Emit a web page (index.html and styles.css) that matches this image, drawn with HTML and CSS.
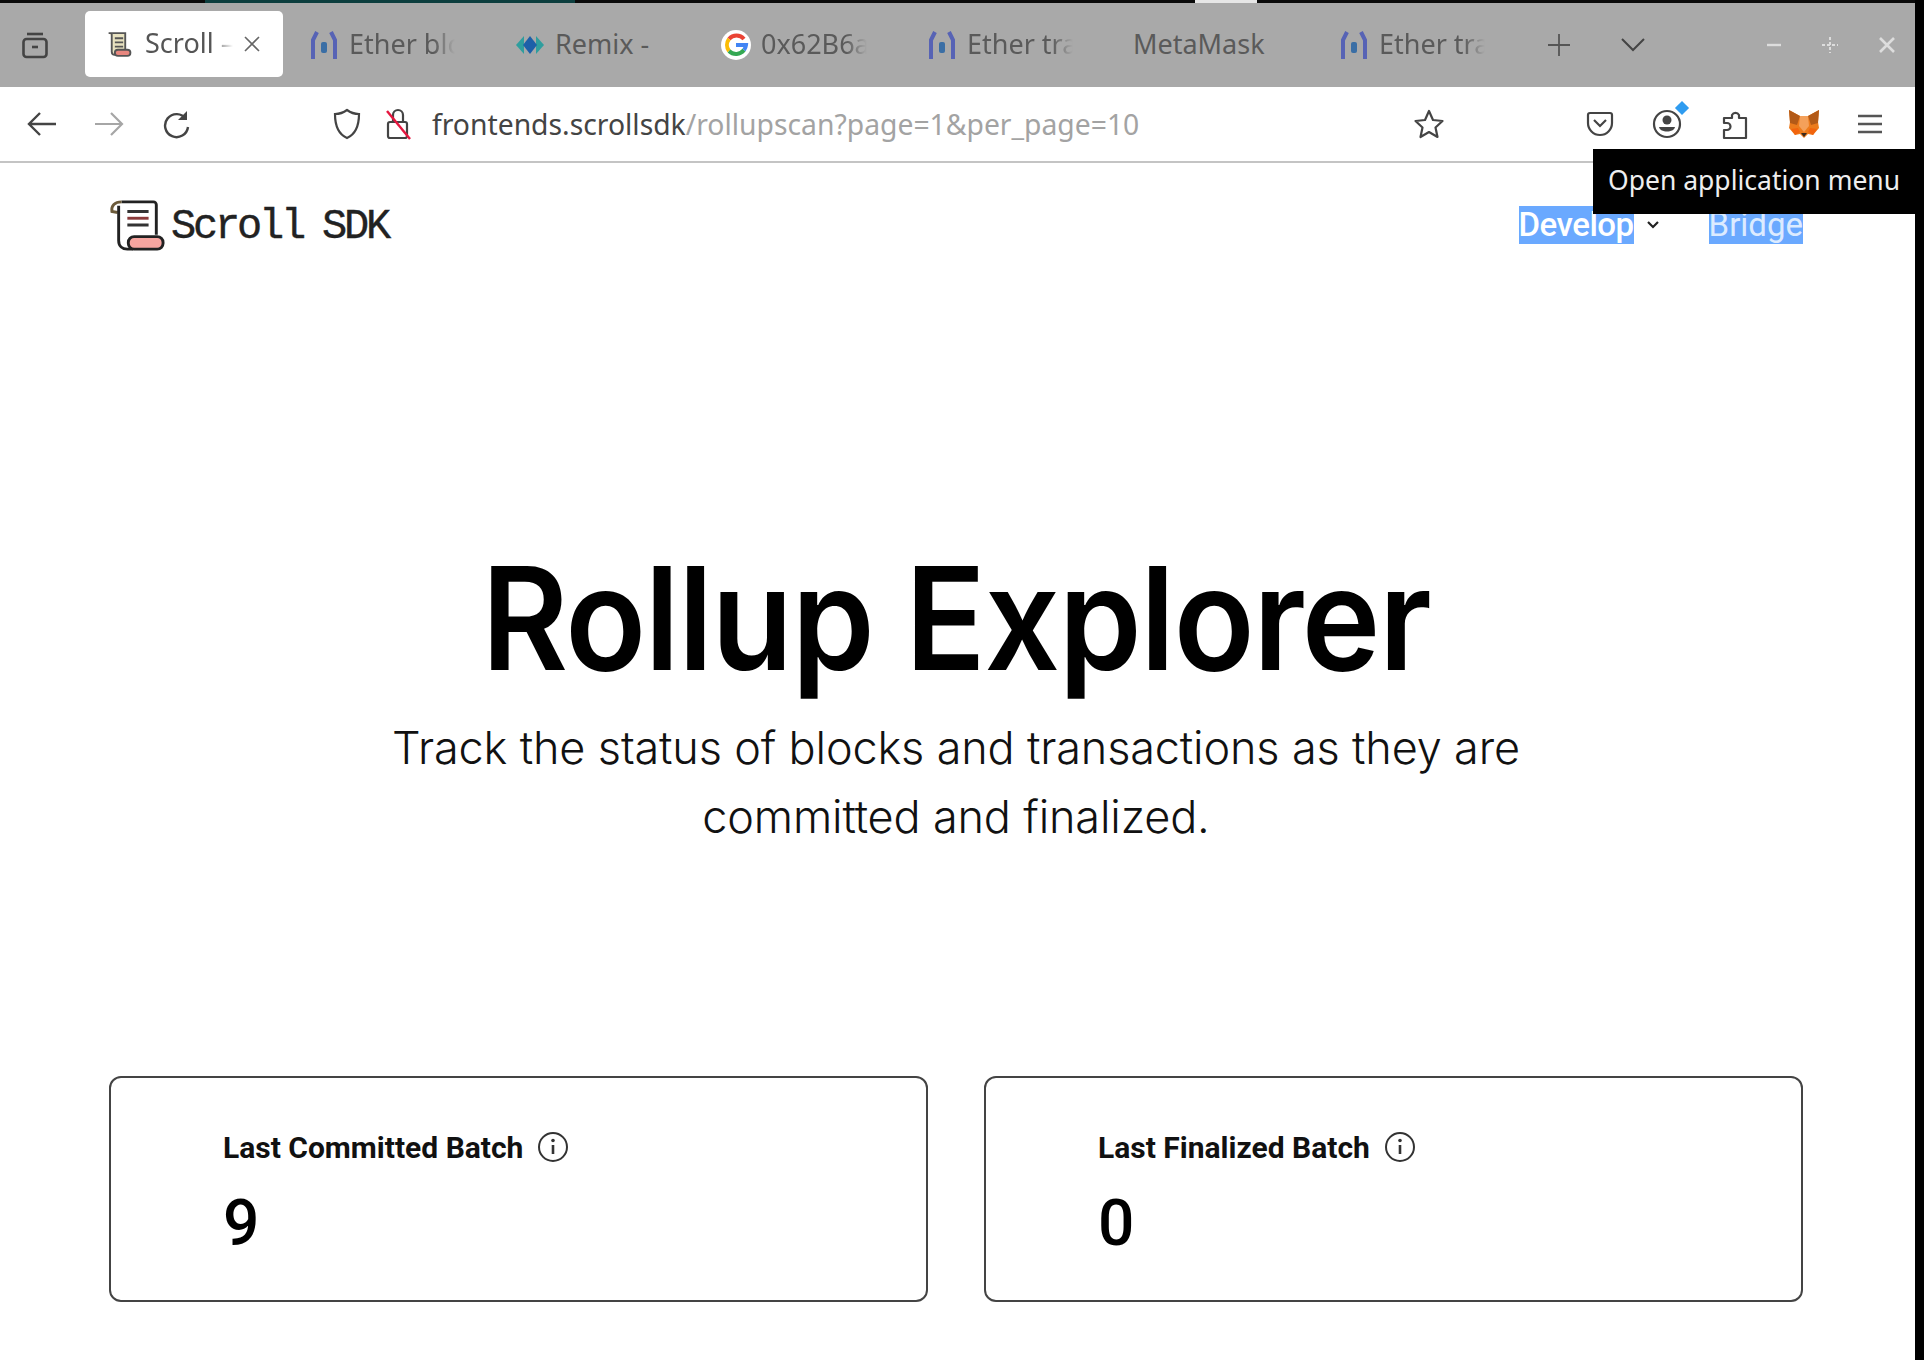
FILE: index.html
```html
<!DOCTYPE html>
<html lang="en">
<head>
    <meta charset="UTF-8">
    <title>Scroll - Rollup Explorer</title>
    <link rel="stylesheet" href="styles.css">
</head>
<body>
    <div class="window">
        <!-- Top edge of the screen -->
        <div class="screen-edge">
            <span class="edge-teal"></span>
            <span class="edge-light"></span>
        </div>

        <!-- Tab strip -->
        <div class="tabbar">
            <svg class="tab-list-icon" width="32" height="32" viewBox="0 0 32 32" fill="none" stroke="#444" stroke-width="2.600"><path d="M8 5h16"/><rect x="4.500" y="10" width="23" height="18" rx="3"/><path d="M13 18h6"/></svg>
            <div class="tab tab-active">
                <svg class="favicon" width="28" height="27" viewBox="0 0 26 26" fill="none" stroke="#555" stroke-width="1.800"><path d="M3 2h16v17" fill="#e8e2c0"/><path d="M6 2v18a3 3 0 0 0 3 3h13" fill="#e8e2c0"/><path d="M9 7h8M9 11h8M9 15h8"/><rect x="9" y="18" width="15" height="6" rx="3" fill="#e8877f" stroke="#555"/></svg>
                <span class="tab-title tab-title-active">Scroll –</span>
                <svg class="tab-close" width="18" height="18" viewBox="0 0 18 18" stroke="#666" stroke-width="1.600"><path d="M2 2l14 14M16 2L2 16"/></svg>
            </div>
            <div class="tab">
                <svg class="favicon" width="30" height="32" viewBox="0 0 30 32" fill="none"><path d="M4 30V11l4-8M26 30V11l-4-8" stroke="#5763b5" stroke-width="4"/><rect x="12" y="13" width="6" height="11" rx="2" fill="#3a6ea5"/></svg>
                <span class="tab-title tab-fade">Ether blo</span>
            </div>
            <div class="tab">
                <svg class="favicon" width="30" height="26" viewBox="0 0 30 26"><path d="M1 13l8-9v18z" fill="#2f9e9e"/><path d="M29 13l-8-9v18z" fill="#2f9e9e"/><path d="M15 4l7 9-7 9-7-9z" fill="#1d5fa8"/></svg>
                <span class="tab-title">Remix -</span>
            </div>
            <div class="tab">
                <svg class="favicon" width="30" height="30" viewBox="0 0 30 30" fill="none" stroke-width="4"><circle cx="15" cy="15" r="15" fill="#fff" stroke="none"/><path d="M23 9a10 10 0 0 0-15 0" stroke="#ea4335"/><path d="M8 9a10 10 0 0 0 0 12" stroke="#fbbc05"/><path d="M8 21a10 10 0 0 0 15-1" stroke="#34a853"/><path d="M23 20a10 10 0 0 0 2-5H15" stroke="#4285f4"/></svg>
                <span class="tab-title tab-fade">0x62B6a</span>
            </div>
            <div class="tab">
                <svg class="favicon" width="30" height="32" viewBox="0 0 30 32" fill="none"><path d="M4 30V11l4-8M26 30V11l-4-8" stroke="#5763b5" stroke-width="4"/><rect x="12" y="13" width="6" height="11" rx="2" fill="#3a6ea5"/></svg>
                <span class="tab-title tab-fade">Ether tra</span>
            </div>
            <div class="tab">
                <span class="tab-title">MetaMask</span>
            </div>
            <div class="tab">
                <svg class="favicon" width="30" height="32" viewBox="0 0 30 32" fill="none"><path d="M4 30V11l4-8M26 30V11l-4-8" stroke="#5763b5" stroke-width="4"/><rect x="12" y="13" width="6" height="11" rx="2" fill="#3a6ea5"/></svg>
                <span class="tab-title tab-fade">Ether tra</span>
            </div>
            <svg class="tab-plus" width="24" height="24" viewBox="0 0 24 24" stroke="#555" stroke-width="1.800"><path d="M12 1v22M1 12h22"/></svg>
            <svg class="tab-more" width="26" height="16" viewBox="0 0 26 16" fill="none" stroke="#444" stroke-width="2"><path d="M2 2l11 11L24 2"/></svg>
            <div class="window-controls">
                <svg width="16" height="16" viewBox="0 0 16 16" stroke="#ddd" stroke-width="2.400"><path d="M1 8h14"/></svg>
                <svg width="18" height="18" viewBox="0 0 18 18" stroke="#ddd" stroke-width="2" stroke-dasharray="3 2"><path d="M9 1v16M1 9h16"/></svg>
                <svg width="18" height="18" viewBox="0 0 18 18" stroke="#ddd" stroke-width="2.600"><path d="M2 2l14 14M16 2L2 16"/></svg>
            </div>
        </div>

        <!-- Address bar -->
        <div class="toolbar">
            <svg class="nav-icon" width="30" height="26" viewBox="0 0 30 26" fill="none" stroke="#444" stroke-width="2.400"><path d="M29 13H3M13 2L2 13l11 11"/></svg>
            <svg class="nav-icon nav-forward" width="30" height="26" viewBox="0 0 30 26" fill="none" stroke="#a6a6a6" stroke-width="2.200"><path d="M1 13h26M17 2l11 11-11 11"/></svg>
            <svg class="nav-icon nav-reload" width="30" height="30" viewBox="0 0 30 30" fill="none" stroke="#444" stroke-width="2.400"><path d="M25 10a11.500 11.500 0 1 0 2 8"/><path d="M26 2v9h-9" fill="#444" stroke="none"/></svg>
            <svg class="shield" width="28" height="32" viewBox="0 0 28 32" fill="none" stroke="#444" stroke-width="2.200"><path d="M14 2C10 5 6 6 2 6c0 12 3 20 12 24 9-4 12-12 12-24-4 0-8-1-12-4z"/></svg>
            <svg class="lock" width="26" height="34" viewBox="0 0 26 34" fill="none"><rect x="3" y="15" width="19" height="16" rx="2" stroke="#444" stroke-width="2.200"/><path d="M8 15V8a5 5 0 0 1 10 0v7" stroke="#444" stroke-width="2.200"/><path d="M2 4l23 28" stroke="#e5173f" stroke-width="2.400"/></svg>
            <div class="url"><span class="url-host">frontends.scrollsdk</span><span class="url-path">/rollupscan?page=1&amp;per_page=10</span></div>
            <svg class="star" width="32" height="32" viewBox="0 0 32 32" fill="none" stroke="#444" stroke-width="2.200" stroke-linejoin="round"><path d="M16 3l4 9 9.500 1-7 6.500 2 9.500-8.500-5-8.500 5 2-9.500-7-6.500 9.500-1z"/></svg>
            <div class="toolbar-right">
                <svg width="28" height="28" viewBox="0 0 28 28" fill="none" stroke="#444" stroke-width="2.200"><path d="M4 3h20a2 2 0 0 1 2 2v8a12 12 0 0 1-24 0V5a2 2 0 0 1 2-2z"/><path d="M8 10l6 6 6-6"/></svg>
                <div class="account">
                    <svg width="30" height="30" viewBox="0 0 30 30" fill="none" stroke="#444" stroke-width="2.200"><circle cx="15" cy="15" r="13"/><circle cx="15" cy="11" r="4.500" fill="#444" stroke="none"/><path d="M7 18h16c-1 6-15 6-16 0z" fill="#444" stroke="none"/></svg>
                    <span class="account-dot"></span>
                </div>
                <svg width="30" height="32" viewBox="0 0 30 32" fill="none" stroke="#444" stroke-width="2.200" stroke-linejoin="round"><path d="M4 30v-8h3a3.500 3.500 0 0 0 0-7H4V10h8V7a4 4 0 0 1 7 0v3h7v20z"/></svg>
                <svg width="32" height="30" viewBox="0 0 32 30"><path d="M1 1l11 6h8l11-6-1 12 1 6-6 7-5-1-4 4-4-4-5 1-6-7 1-6z" fill="#ec7b1c"/><path d="M1 1l11 6-3 9-7-2z" fill="#b35a17"/><path d="M31 1L20 7l3 9 7-2z" fill="#b35a17"/><path d="M12 7h8l1 10-5 6-5-6z" fill="#f4a05a"/><path d="M3 20l7-1 2 4-5 3z" fill="#f2640d"/><path d="M29 20l-7-1-2 4 5 3z" fill="#f2640d"/><path d="M13 24h6l-3 4z" fill="#3a2a1d"/></svg>
                <svg width="24" height="20" viewBox="0 0 24 20" stroke="#555" stroke-width="2.400"><path d="M0 2h24M0 10h24M0 18h24"/></svg>
            </div>
        </div>

        <!-- Page content -->
        <div class="page">
            <div class="site-header">
                <div class="logo">
                    <svg width="56" height="56" viewBox="0 0 58 56" fill="none" stroke="#222" stroke-width="3"><path d="M13 4h33a3 3 0 0 1 3 3v31"/><path d="M13 4C6 4 2 8 3 14l6 1" stroke="#6b5a3a"/><path d="M10 8v36c0 6 4 9 9 9h6"/><path d="M19 14h22M19 28h22" stroke="#333"/><path d="M19 21h22" stroke="#8a3a3a"/><rect x="20" y="40" width="36" height="13" rx="6" fill="#f7a5a0" stroke="#222"/></svg>
                    <span class="logo-text">Scroll SDK</span>
                </div>
                <div class="site-nav">
                    <span class="nav-item"><span class="selected selected-strong">Develop</span>
                        <svg class="caret" width="14" height="10" viewBox="0 0 14 10" fill="none" stroke="#222" stroke-width="2.200"><path d="M2 2l5 5 5-5"/></svg>
                    </span>
                    <span class="selected">Bridge</span>
                </div>
            </div>

            <!-- Tooltip sits over the nav links -->
            <div class="tooltip">Open application menu</div>

            <div class="hero">
                <h1>Rollup Explorer</h1>
                <p>Track the status of blocks and transactions as they are committed and finalized.</p>
            </div>

            <div class="cards">
                <div class="card">
                    <div class="card-label">Last Committed Batch
                        <svg class="info" width="32" height="32" viewBox="0 0 32 32" fill="none" stroke="#333" stroke-width="2"><circle cx="16" cy="16" r="14"/><path d="M16 14v9" stroke-width="2.600"/><circle cx="16" cy="9.500" r="1.800" fill="#333" stroke="none"/></svg>
                    </div>
                    <div class="card-value">9</div>
                </div>
                <div class="card">
                    <div class="card-label">Last Finalized Batch
                        <svg class="info" width="32" height="32" viewBox="0 0 32 32" fill="none" stroke="#333" stroke-width="2"><circle cx="16" cy="16" r="14"/><path d="M16 14v9" stroke-width="2.600"/><circle cx="16" cy="9.500" r="1.800" fill="#333" stroke="none"/></svg>
                    </div>
                    <div class="card-value">0</div>
                </div>
            </div>
        </div>
    </div>
</body>
</html>
```
FILE: styles.css
```css
html, body {
    margin: 0;
    padding: 0;
    background-color: #000;
}
.window {
    width: 1915px;
    height: 1360px;
    overflow: hidden;
    background-color: #fff;
    font-family: "Noto Sans", "DejaVu Sans", sans-serif;
}
.screen-edge {
    height: 3px;
    background-color: #0a0a0a;
    position: relative;
}
.edge-teal {
    position: absolute;
    left: 205px;
    width: 370px;
    height: 3px;
    background-color: #0d3f3f;
}
.edge-light {
    position: absolute;
    left: 1195px;
    width: 62px;
    height: 3px;
    background-color: #e6e6e6;
}

/* Tab strip */
.tabbar {
    height: 84px;
    background-color: #a9a9a9;
    display: flex;
    align-items: center;
    color: #5a5a5a;
    font-size: 27px;
}
.tab-list-icon {
    margin-left: 19px;
    margin-right: 34px;
}
.tab {
    width: 206px;
    height: 66px;
    box-sizing: border-box;
    display: flex;
    align-items: center;
    padding-left: 26px;
    gap: 10px;
    white-space: nowrap;
    overflow: hidden;
}
.tab-title {
    margin-top: -4px;
}
.tab-active {
    width: 198px;
    padding-left: 20px;
    gap: 12px;
    background-color: #fff;
    border-radius: 5px;
    color: #555;
    margin-top: -2px;
}
.tab-fade {
    width: 106px;
    overflow: hidden;
    -webkit-mask-image: linear-gradient(to right, #000 80%, transparent);
    mask-image: linear-gradient(to right, #000 80%, transparent);
}
.tab-title-active {
    width: 88px;
    overflow: hidden;
    -webkit-mask-image: linear-gradient(to right, #000 75%, transparent);
    mask-image: linear-gradient(to right, #000 75%, transparent);
}
.tab-close {
    margin-left: -2px;
}
.tab-plus {
    margin-left: 28px;
}
.tab-more {
    margin-left: 49px;
}
.window-controls {
    display: flex;
    align-items: center;
    gap: 39px;
    margin-left: 120px;
}

/* Address bar */
.toolbar {
    height: 76px;
    box-sizing: border-box;
    border-bottom: 2px solid #c4c4c4;
    display: flex;
    align-items: center;
    padding-left: 27px;
}
.nav-icon {
    margin-right: 37px;
}
.nav-reload {
    margin-right: 0;
}
.shield {
    margin-left: 142px;
}
.lock {
    margin-left: 24px;
}
.url {
    margin-left: 21px;
    font-size: 28.300px;
    white-space: nowrap;
    width: 981px;
}
.url-host {
    color: #444;
}
.url-path {
    color: #a3a3a3;
}
.toolbar-right {
    display: flex;
    align-items: center;
    gap: 38px;
    margin-left: 141px;
}
.account {
    position: relative;
    height: 30px;
}
.account-dot {
    position: absolute;
    top: -6px;
    right: -5px;
    width: 10px;
    height: 10px;
    background-color: #2f9cf0;
    transform: rotate(45deg);
}

/* Page */
.page {
    position: relative;
    padding: 0 112px 0 109px;
}
.tooltip {
    position: absolute;
    top: -14px;
    right: 0;
    width: 322px;
    height: 65px;
    box-sizing: border-box;
    padding-left: 15px;
    line-height: 62px;
    background-color: #000;
    color: #eee;
    font-size: 26.500px;
    white-space: nowrap;
}
.site-header {
    height: 124px;
    display: flex;
    align-items: center;
    justify-content: space-between;
    font-family: Roboto, "Liberation Sans", sans-serif;
}
.logo {
    display: flex;
    align-items: center;
    gap: 6px;
}
.logo-text {
    margin-top: 3px;
    font-family: "Liberation Mono", "DejaVu Sans Mono", monospace;
    font-size: 42px;
    letter-spacing: -3.200px;
    word-spacing: -3px;
    -webkit-text-stroke: 0.4px #222;
    color: #222;
}
.site-nav {
    display: flex;
    align-items: center;
    gap: 49px;
    font-size: 33px;
}
.nav-item {
    display: flex;
    align-items: center;
    gap: 12px;
}
.selected {
    background-color: #6aa9ff;
    color: #dcebff;
    line-height: 38px;
}
.selected-strong {
    color: #fff;
    font-weight: 500;
    letter-spacing: -0.5px;
}

.hero {
    margin-top: 246px;
    text-align: center;
    font-family: Inter, "Liberation Sans", sans-serif;
}
.hero h1 {
    margin: 0;
    font-size: 143px;
    font-weight: 600;
    letter-spacing: -1.500px;
    line-height: 170px;
    color: #000;
    transform: scaleX(0.93);
}
.hero p {
    margin: 10px auto 0;
    width: 1200px;
    font-size: 45px;
    font-weight: 300;
    letter-spacing: -0.150px;
    line-height: 69px;
    color: #111;
}

.cards {
    margin-top: 225px;
    display: grid;
    grid-template-columns: 1fr 1fr;
    gap: 56px;
}
.card {
    height: 226px;
    box-sizing: border-box;
    border: 2px solid #444;
    border-radius: 12px;
    padding: 51px 0 0 112px;
}
.card-label {
    display: flex;
    align-items: center;
    gap: 14px;
    font-family: Roboto, "Liberation Sans", sans-serif;
    font-size: 30px;
    font-weight: 700;
    color: #111;
    height: 36px;
}
.card-value {
    margin-top: 21px;
    font-family: Roboto, "Liberation Sans", sans-serif;
    font-size: 64px;
    font-weight: 500;
    color: #000;
    line-height: 76px;
}
```
